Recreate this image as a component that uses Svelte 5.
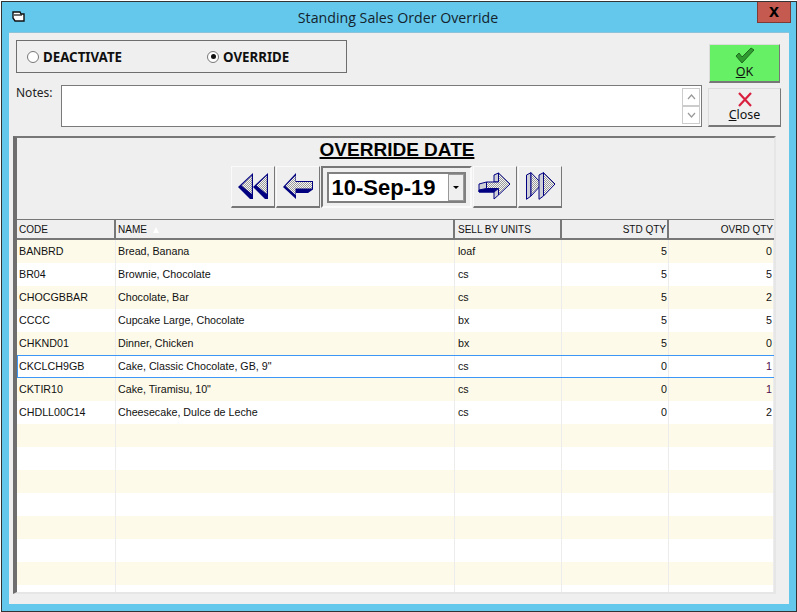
<script>
    const rows = [
        { code: 'BANBRD', name: 'Bread, Banana', units: 'loaf', std: 5, ovrd: 0 },
        { code: 'BR04', name: 'Brownie, Chocolate', units: 'cs', std: 5, ovrd: 5 },
        { code: 'CHOCGBBAR', name: 'Chocolate, Bar', units: 'cs', std: 5, ovrd: 2 },
        { code: 'CCCC', name: 'Cupcake Large, Chocolate', units: 'bx', std: 5, ovrd: 5 },
        { code: 'CHKND01', name: 'Dinner, Chicken', units: 'bx', std: 5, ovrd: 0 },
        { code: 'CKCLCH9GB', name: 'Cake, Classic Chocolate, GB, 9"', units: 'cs', std: 0, ovrd: 1, selected: true },
        { code: 'CKTIR10', name: 'Cake, Tiramisu, 10"', units: 'cs', std: 0, ovrd: 1, changed: true },
        { code: 'CHDLL00C14', name: 'Cheesecake, Dulce de Leche', units: 'cs', std: 0, ovrd: 2 },
        ...Array(8).fill({ code: '', name: '', units: '', std: '', ovrd: '' })
    ];
</script>

<div class="window">
    <div class="titlebar">
        <svg class="app-icon" width="14" height="14" viewBox="0 0 14 14">
            <path d="M1 2h7l1 2h3v7H3L1 8z" fill="#fff" stroke="#111" stroke-width="1.4" />
            <path d="M2 5h8" stroke="#111" stroke-width="1.2" />
        </svg>
        <div class="title">Standing Sales Order Override</div>
        <div class="close-x">x</div>
    </div>

    <div class="client">
        <div class="top">
            <div class="top-left">
                <div class="radio-group">
                    <label class="radio"><span class="dot"></span>DEACTIVATE</label>
                    <label class="radio"><span class="dot on"></span>OVERRIDE</label>
                </div>
                <div class="notes">
                    <span class="notes-label">Notes:</span>
                    <div class="notes-box">
                        <div class="scroll">
                            <div class="scroll-btn">
                                <svg width="9" height="6" viewBox="0 0 9 6"><path d="M1 5l3.500-4 3.500 4" fill="none" stroke="#999" stroke-width="1.2" /></svg>
                            </div>
                            <div class="scroll-btn">
                                <svg width="9" height="6" viewBox="0 0 9 6"><path d="M1 1l3.500 4 3.500-4" fill="none" stroke="#999" stroke-width="1.2" /></svg>
                            </div>
                        </div>
                    </div>
                </div>
            </div>
            <div class="actions">
                <button class="action ok">
                    <svg width="20" height="17" viewBox="0 0 20 17">
                        <path d="M1 9l3-3 3 4 9-9 3 2L7 16z" fill="#2f9a2f" stroke="#1f6b1f" stroke-width="1" />
                    </svg>
                    <span><u>O</u>K</span>
                </button>
                <button class="action close">
                    <svg width="16" height="15" viewBox="0 0 16 15">
                        <path d="M2 1l12 13M14 1L2 14" stroke="#d9213f" stroke-width="2.2" fill="none" />
                    </svg>
                    <span><u>C</u>lose</span>
                </button>
            </div>
        </div>

        <div class="panel">
            <div class="panel-head">OVERRIDE DATE</div>
            <div class="nav">
                <button class="nav-btn" aria-label="First">
                    <svg width="44" height="42" viewBox="0 0 44 42">
                        <defs>
                            <pattern id="dith" width="2" height="2" patternUnits="userSpaceOnUse">
                                <rect width="2" height="2" fill="#f4f4f4" />
                                <rect width="1" height="1" fill="#9a9a9a" />
                                <rect x="1" y="1" width="1" height="1" fill="#9a9a9a" />
                            </pattern>
                        </defs>
                        <path d="M7 21L22 7v26h-3z" fill="#000080" />
                        <path d="M10.500 19.500L20.800 9.500V28z" fill="url(#dith)" />
                        <path d="M22 21L37 7v26h-3z" fill="#000080" />
                        <path d="M25.500 19.500L35.800 9.500V28z" fill="url(#dith)" />
                    </svg>
                </button>
                <button class="nav-btn" aria-label="Previous">
                    <svg width="44" height="42" viewBox="0 0 44 42">
                        <path d="M7 21L20 7v8h17v8.500L32 27H20v6z" fill="#000080" />
                        <path d="M9.500 20L19.500 9.500V16H36v6.500H19.500V29z" fill="url(#dith)" />
                    </svg>
                </button>
                <div class="date-wrap">
                    <div class="date-box">
                        <span class="date-text">10-Sep-19</span>
                        <div class="date-drop"><span class="caret"></span></div>
                    </div>
                </div>
                <button class="nav-btn" aria-label="Next">
                    <svg width="44" height="42" viewBox="0 0 44 42">
                        <path d="M21 9l4.500-2v9H21z" fill="#cfcfd8" stroke="#000080" />
                        <path d="M6 24h15v2H6zM6 24l7.500-1.500h12L21 26H6z" fill="#000080" stroke="#000080" />
                        <path d="M6 18l7.500-2v6.500L6 24z" fill="#cfcfd8" stroke="#000080" />
                        <path d="M21 26l4.500-3.500V29L21 33z" fill="#cfcfd8" stroke="#000080" />
                        <path d="M13.500 16h12V7L37 18 25.500 29v-6.500h-12z" fill="url(#dith)" stroke="#000080" />
                    </svg>
                </button>
                <button class="nav-btn" aria-label="Last">
                    <svg width="44" height="42" viewBox="0 0 44 42">
                        <path d="M8.500 9l4.500-2.300V30l-4.500 3.300z" fill="#cfcfd8" stroke="#000080" />
                        <path d="M13 6.700L24 18 13 30z" fill="url(#dith)" stroke="#000080" />
                        <path d="M21 9l4.500-2.300V30L21 33.300z" fill="#cfcfd8" stroke="#000080" />
                        <path d="M25.500 6.700L37 18 25.500 30z" fill="url(#dith)" stroke="#000080" />
                    </svg>
                </button>
            </div>

            <div class="grid">
                <div class="grid-row header">
                    <div class="cell">CODE</div>
                    <div class="cell">NAME <span class="sort"></span></div>
                    <div class="cell">SELL BY UNITS</div>
                    <div class="cell num">STD QTY</div>
                    <div class="cell num">OVRD QTY</div>
                </div>
                <div class="grid-body">
                    {#each rows as row, i}
                        <div class="grid-row" class:alt={i % 2 === 0} class:selected={row.selected}>
                            <div class="cell">{row.code}</div>
                            <div class="cell">{row.name}</div>
                            <div class="cell">{row.units}</div>
                            <div class="cell num">{row.std}</div>
                            <div class="cell num" class:over={row.selected || row.changed}>{row.ovrd}</div>
                        </div>
                    {/each}
                </div>
            </div>
        </div>
    </div>
</div>

<style>
    :global(body) {
        margin: 0;
        background: #fff;
    }

    .window {
        width: 796px;
        height: 611px;
        margin: 1px 0 0 1px;
        box-sizing: border-box;
        border: 1px solid #333;
        background: #63c8ec;
        padding: 0 7px 7px 7px;
        display: flex;
        flex-direction: column;
        font-family: "Liberation Sans", Arial, sans-serif;
        color: #111;
    }

    .titlebar {
        height: 30px;
        display: flex;
        align-items: center;
        position: relative;
        flex-shrink: 0;
    }

    .app-icon {
        margin-left: 3px;
    }

    .title {
        flex: 1;
        text-align: center;
        font-family: "Open Sans", sans-serif;
        font-size: 14.200px;
        color: #14232c;
        padding-right: 19px;
    }

    .close-x {
        position: absolute;
        top: 0;
        right: -2px;
        width: 34px;
        height: 21px;
        background: #c45a50;
        border: 1px solid #7e3a34;
        border-top: 0;
        box-sizing: border-box;
        text-align: center;
        font: bold 18px/18px "Liberation Sans", sans-serif;
        color: #000;
    }

    .client {
        flex: 1;
        background: #efefef;
        border-top: 1px solid #8cc3d9;
        padding: 7px 8px 10px 4px;
        display: flex;
        flex-direction: column;
        min-height: 0;
    }

    .top {
        display: flex;
        justify-content: space-between;
        height: 88px;
        padding-left: 3px;
        flex-shrink: 0;
    }

    .top-left {
        width: 686px;
    }

    .radio-group {
        width: 331px;
        height: 33px;
        box-sizing: border-box;
        border: 1px solid #6e6e6e;
        display: flex;
        align-items: center;
        padding-left: 10px;
    }

    .radio {
        width: 180px;
        flex-shrink: 0;
        display: flex;
        align-items: center;
        gap: 4px;
        font-family: "Noto Sans", sans-serif;
        font-weight: 700;
        font-size: 13.300px;
        color: #101010;
    }

    .dot {
        width: 10px;
        height: 10px;
        border: 1px solid #777;
        border-radius: 50%;
        background: #fff;
        position: relative;
    }

    .dot.on::after {
        content: "";
        position: absolute;
        top: 2.500px;
        left: 2.500px;
        width: 5px;
        height: 5px;
        border-radius: 50%;
        background: #111;
    }

    .notes {
        margin-top: 12px;
        display: flex;
    }

    .notes-label {
        width: 45px;
        font-family: "Noto Sans", sans-serif;
        font-size: 12px;
        line-height: 16px;
        color: #222;
    }

    .notes-box {
        width: 641px;
        height: 42px;
        box-sizing: border-box;
        border: 1px solid #7a7a7a;
        background: #fff;
        display: flex;
        justify-content: flex-end;
        padding: 2px 1px;
    }

    .scroll {
        width: 18px;
        display: flex;
        flex-direction: column;
    }

    .scroll-btn {
        flex: 1;
        border: 1px solid #ccc;
        display: flex;
        align-items: center;
        justify-content: center;
    }

    .actions {
        width: 73px;
        padding-top: 4px;
        display: flex;
        flex-direction: column;
        align-items: center;
        gap: 5px;
    }

    .action {
        display: flex;
        flex-direction: column;
        align-items: center;
        justify-content: center;
        padding: 0;
        box-sizing: border-box;
        border: 1px solid #dcdcdc;
        border-right-color: #777;
        border-bottom: 2px solid #777;
        font-family: "Noto Sans", sans-serif;
        font-size: 12.500px;
        line-height: 15px;
        color: #111;
    }

    .ok {
        width: 71px;
        height: 39px;
        background: #66f065;
    }

    .close {
        width: 73px;
        height: 39px;
        background: #efefef;
    }

    .panel {
        flex: 1;
        min-height: 0;
        margin-top: 8px;
        width: 763px;
        box-sizing: border-box;
        border: 2px solid #e6e6e6;
        border-top-color: #777;
        border-left: 4px solid #6e6e6e;
        display: flex;
        flex-direction: column;
    }

    .panel-head {
        text-align: center;
        font-weight: bold;
        font-size: 19px;
        line-height: 22px;
        padding-left: 3px;
        padding-top: 1px;
        text-decoration: underline;
        text-decoration-thickness: 2px;
        color: #000;
        height: 23px;
    }

    .nav {
        display: flex;
        justify-content: center;
        gap: 1px;
        height: 42px;
        margin-top: 4px;
        padding-left: 1px;
    }

    .nav-btn {
        width: 44px;
        height: 42px;
        padding: 0;
        box-sizing: border-box;
        background: #efefef;
        border: 1px solid #fafafa;
        border-right-color: #777;
        border-bottom: 2px solid #777;
        display: block;
    }

    .nav-btn svg {
        display: block;
        margin: -1px;
    }

    .date-wrap {
        width: 151px;
        box-sizing: border-box;
        border: 2px solid #fafafa;
        border-top-color: #777;
        border-left-color: #777;
        padding: 4px;
    }

    .date-box {
        height: 31px;
        box-sizing: border-box;
        border: 2px solid #808080;
        background: #fff;
        display: flex;
        align-items: center;
        justify-content: space-between;
    }

    .date-text {
        font-weight: bold;
        font-size: 22px;
        margin-left: 3px;
        color: #000;
    }

    .date-drop {
        width: 16px;
        height: 100%;
        background: #efefef;
        border: 1px solid #999;
        box-sizing: border-box;
        display: flex;
        align-items: center;
        justify-content: center;
    }

    .caret {
        border: 3px solid transparent;
        border-top: 3px solid #000;
        border-bottom: 0;
    }

    .grid {
        margin-top: 11px;
        flex: 1;
        min-height: 0;
        display: flex;
        flex-direction: column;
    }

    .grid-body {
        flex: 1;
        min-height: 0;
        overflow: hidden;
    }

    .grid-row {
        display: grid;
        grid-template-columns: 99px 339px 107px 107px 105px;
        height: 23px;
        box-sizing: border-box;
        background: #fff;
        font-size: 10.700px;
    }

    .grid-row.alt {
        background: #fdfae9;
    }

    .grid-row.selected {
        background: #fff;
        border-top: 1px solid #3c96f5;
        border-bottom: 1px solid #3c96f5;
    }

    .cell {
        border-right: 1px solid #ececec;
        padding: 0 1px 2px 3px;
        display: flex;
        align-items: center;
        white-space: pre;
        color: #111;
    }

    .cell:first-child,
    .cell:nth-child(2) {
        padding-left: 2px;
    }

    .grid-row.selected .cell:first-child {
        border-left: 1px solid #3c96f5;
        padding-left: 1px;
    }

    .cell.num {
        justify-content: flex-end;
    }

    .cell.over {
        color: #4d0b4d;
    }

    .header {
        height: 21px;
        background: #efefef;
        border-top: 1px solid #777;
        border-bottom: 2px solid #777;
    }

    .header .cell {
        border-right: 2px solid #777;
        padding-top: 1px;
        padding-bottom: 0;
        font-size: 10px;
    }

    .header .cell:last-child {
        border-right: 0;
    }

    .sort {
        width: 0;
        height: 0;
        margin-left: 3px;
        border: 3px solid transparent;
        border-bottom: 6px solid #fff;
        border-top: 0;
    }
</style>
